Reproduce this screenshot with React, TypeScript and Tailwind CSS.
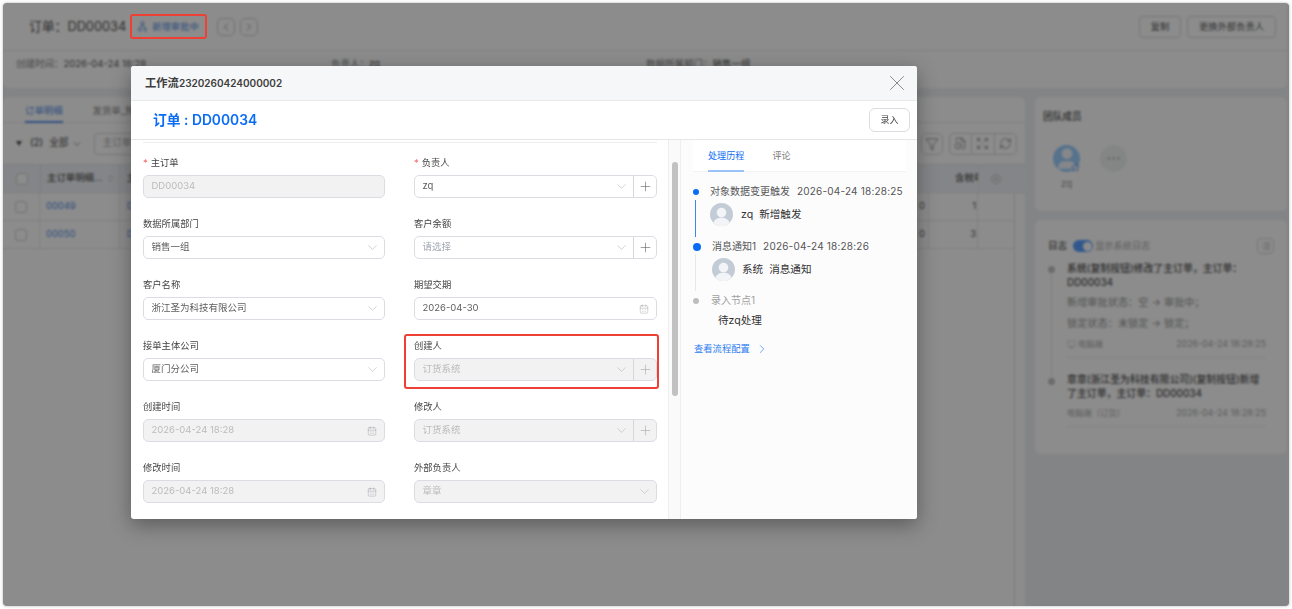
import { CalendarDays, ChevronDown, ChevronLeft, ChevronRight, ChevronsUpDown, Ellipsis, Expand, FileClock, Filter, List, Monitor, Plus, RefreshCw, Settings, Star, User, X } from 'lucide-react';

const font = "font-['Inter','Noto_Sans_CJK_SC',sans-serif]";

function Avatar({ className }: { className: string }) {
  return (
    <div className={`flex shrink-0 items-end justify-center overflow-hidden rounded-full bg-[#c3ccd6] ${className}`}>
      <svg viewBox="0 0 24 24" className="h-full w-full" fill="#f2f4f7">
        <circle cx="12" cy="10" r="5" />
        <path d="M3 24c0-6 4-8.500 9-8.500s9 2.500 9 8.500z" />
      </svg>
    </div>
  );
}

function FlowIcon() {
  return (
    <svg width="9" height="11" viewBox="0 0 9 11" fill="none" stroke="currentColor" strokeWidth="0.9">
      <circle cx="4.500" cy="2.300" r="1.600" />
      <circle cx="1.800" cy="8.500" r="1.500" />
      <circle cx="7.200" cy="8.500" r="1.500" />
      <path d="M3.800 3.800 2.500 7M5.200 3.800 6.500 7" />
    </svg>
  );
}

function Field({ label, required, children }: { label: string; required?: boolean; children: React.ReactNode }) {
  return (
    <div className="h-[61px]">
      <div className="flex h-[19px] items-center text-[9.300px] leading-none text-[#444]">
        {required && <span className="mr-[3px] text-[#f56c6c]">*</span>}
        {label}
      </div>
      {children}
    </div>
  );
}

function Input({ value, disabled, placeholder, icon, plus }: { value: string; disabled?: boolean; placeholder?: boolean; icon?: 'chevron' | 'calendar'; plus?: boolean }) {
  const tone = disabled ? 'bg-[#f2f2f3] text-[#bbb]' : placeholder ? 'bg-white text-[#a3a9b3]' : 'bg-white text-[#5c5c5c]';
  return (
    <div className={`mt-[3px] flex h-[23px] items-center rounded-[5px] border border-[#dcdde2] text-[9.500px] ${tone}`}>
      <span className="flex-1 pl-[7.500px]">{value}</span>
      {icon === 'chevron' && <ChevronDown size={15} strokeWidth={0.9} className="mr-[4px] text-[#aeb2ba]" />}
      {icon === 'calendar' && <CalendarDays size={10} strokeWidth={0.9} className="mr-[7px] text-[#8c8f96]" />}
      {plus && (
        <span className="flex h-full w-[23px] items-center justify-center border-l border-[#d6d7dc]">
          <Plus size={15} strokeWidth={0.9} className={disabled ? 'text-[#a3a3a3]' : 'text-[#555]'} />
        </span>
      )}
    </div>
  );
}

function Background() {
  return (
    <div className="flex h-full flex-col pr-[2px] text-[#5c5c5c]">
      <div className="h-[85px] rounded-b-[6px] bg-white">
        <div className="-mr-[2px] flex h-[48px] items-center border-b border-[#e6e6e6] pl-[26px] pr-[13px]">
          <span className="text-[12.800px] text-[#555]">订单：DD00034</span>
          <span className="ml-[12px] flex items-center gap-[5px] text-[9.300px] text-[#5590e8]">
            <FlowIcon />
            新增审批中
          </span>
          <span className="ml-[18px] flex h-[18px] w-[18px] items-center justify-center rounded-[5px] border border-[#cfcfcf]"><ChevronLeft size={12} strokeWidth={1.2} /></span>
          <span className="ml-[5px] flex h-[18px] w-[18px] items-center justify-center rounded-[5px] border border-[#cfcfcf]"><ChevronRight size={12} strokeWidth={1.2} /></span>
          <span className="ml-auto flex h-[22px] w-[42px] items-center justify-center rounded-[4px] border border-[#d9d9d9] text-[9.300px]">复制</span>
          <span className="ml-[6px] flex h-[22px] w-[89px] items-center justify-center rounded-[4px] border border-[#d9d9d9] text-[9.300px]">更换外部负责人</span>
        </div>
        <div className="flex pl-[13px] pt-[6px] text-[9.500px] leading-[13px] text-[#888]">
          <span className="w-[315px]">创建时间：<span className="text-[#5c5c5c]">2026-04-24 18:28</span></span>
          <span className="w-[315px]">负责人：<span className="text-[#5c5c5c]">zq</span></span>
          <span>数据所属部门：<span className="text-[#5c5c5c]">销售一组</span></span>
        </div>
      </div>

      <div className="mt-[9px] flex flex-1 gap-[10px]">
        <div className="relative w-[1022px] rounded-t-[6px] bg-white">
          <div className="flex h-[26px] items-end gap-[30px] border-b border-[#e6e6e6] pl-[22px] text-[9.400px]">
            <span className="-mb-px border-b-2 border-[#5590e8] pb-[3px] text-[#5590e8]">订单明细</span>
            <span className="pb-[4px] text-[#888]">发货单_预...</span>
          </div>
          <div className="flex h-[41px] items-center pl-[13px] text-[9.700px]">
            <span className="mr-[8px] h-0 w-0 border-x-[3px] border-t-[5px] border-x-transparent border-t-[#555]" />
            <span className="font-medium">(2)</span>
            <span className="ml-[6px]">全部</span>
            <ChevronDown size={12} strokeWidth={1.3} className="ml-[2px]" />
            <span className="ml-[11px] flex h-[22px] w-[200px] items-center rounded-[4px] border border-[#d9d9d9] pl-[8px] text-[#aaa]">主订单</span>
            <span className="ml-auto flex h-[22px] w-[22px] items-center justify-center rounded-[5px] border border-[#d9d9d9]"><Filter size={14} strokeWidth={1.1} /></span>
            <span className="ml-[6px] mr-[8px] flex h-[22px] w-[68px] items-center rounded-[5px] border border-[#d9d9d9]">
              <span className="flex flex-1 justify-center"><FileClock size={13} strokeWidth={1.1} /></span>
              <span className="flex h-full flex-1 items-center justify-center border-x border-[#d9d9d9]"><Expand size={13} strokeWidth={1.1} /></span>
              <span className="flex flex-1 justify-center"><RefreshCw size={13} strokeWidth={1.1} /></span>
            </span>
          </div>
          <div className="flex h-[29px] items-center border-y border-[#e6e6e6] bg-[#f0f3f8] text-[9.400px] font-medium">
            <span className="flex w-[37px] justify-center"><span className="h-[12px] w-[12px] rounded-[3px] border border-[#cfcfcf] bg-white" /></span>
            <span className="flex h-full w-[80px] items-center justify-between border-x border-[#e0e0e0] pl-[6px] pr-[4px]">主订单明细...<ChevronsUpDown size={9} className="text-[#aaa]" /></span>
            <span className="pl-[7px]">主</span>
            <span className="ml-auto w-[23px] overflow-hidden whitespace-nowrap">含税单价</span>
            <span className="flex h-full w-[47px] items-center justify-center border-l border-[#e4e6ea] pr-[12px]"><Settings size={12} strokeWidth={0.9} className="text-[#999]" /></span>
          </div>
          {['00049', '00050'].map((id, i) => (
            <div key={id} className="mr-[11px] flex h-[28px] items-center border-b border-[#e6e6e6] text-[9.400px]">
              <span className="flex h-full w-[37px] items-center justify-center border-r border-[#e6e6e6]"><span className="h-[12px] w-[12px] rounded-[3px] border border-[#cfcfcf]" /></span>
              <span className="flex h-full w-[80px] items-center border-r border-[#e6e6e6] pl-[6px] text-[#5590e8]">{id}</span>
              <span className="pl-[7px] text-[#5590e8]">D</span>
              <span className="ml-auto flex h-full w-[10px] items-center border-r border-[#e6e6e6]">0</span>
              <span className="flex h-full w-[49px] items-center justify-end border-r border-[#e6e6e6] pr-[1px]">{i === 0 ? '1' : '3'}</span>
              <span className="w-[36px]" />
            </div>
          ))}
          <span className="absolute bottom-0 right-[10px] top-[96px] w-px bg-[#e2e2e2]" />
        </div>

        <div className="flex w-[252px] flex-col gap-[9px]">
          <div className="h-[114px] rounded-[6px] bg-white pl-[8px] pt-[13px]">
            <div className="text-[9.700px] font-medium">团队成员</div>
            <div className="mt-[20px] flex gap-[20px] pl-[10px]">
              <div className="relative">
                <div className="flex h-[27px] w-[27px] items-end justify-center overflow-hidden rounded-full bg-[#9dd0ff]">
                  <User size={26} fill="#f3f6fb" stroke="#f3f6fb" />
                </div>
                <Star size={9} className="absolute right-0 top-[18px] text-[#5590e8]" />
                <div className="mt-[5px] text-center text-[9.500px] text-[#999]">zq</div>
              </div>
              <div className="flex h-[27px] w-[27px] items-center justify-center rounded-full bg-[#f0f3f2]"><Ellipsis size={17} strokeWidth={1} className="text-[#999]" /></div>
            </div>
          </div>
          <div className="h-[234px] rounded-[6px] bg-white pl-[13px] pr-[21px] pt-[18px] text-[10.200px]">
            <div className="flex h-[16px] items-center">
              <span className="text-[9.600px] font-medium">日志</span>
              <span className="ml-[6px] flex h-[12px] w-[20px] items-center justify-end rounded-full bg-[#5aa0ff] pr-[1px]"><span className="h-[9px] w-[9px] rounded-full bg-white" /></span>
              <span className="ml-[2px] text-[9.200px] text-[#aaa]">显示系统日志</span>
              <span className="-mr-[8px] ml-auto flex h-[16px] w-[17px] items-center justify-center rounded-[4px] border border-[#d9d9d9]"><List size={10} strokeWidth={1.2} /></span>
            </div>
            <div className="relative mt-[7px] pl-[19px]">
              <span className="absolute left-0 top-[5px] h-[7px] w-[7px] rounded-full bg-[#c4c4c4]" />
              <span className="absolute left-[3px] top-[12px] h-[105px] w-px bg-[#e6e6e6]" />
              <div className="whitespace-nowrap text-[9.900px] font-medium leading-[14px] text-[#555]">系统(复制按钮)修改了主订单，主订单：<br />DD00034</div>
              <div className="mt-[6px] leading-[14px] text-[#999]">新增审批状态：空 → 审批中；</div>
              <div className="mt-[7px] leading-[14px] text-[#999]">锁定状态：未锁定 → 锁定；</div>
              <div className="mt-[7px] flex h-[21px] items-start justify-between border-b border-[#eee] text-[8.800px] leading-[14px] text-[#aaa]">
                <span className="flex items-center gap-[2px] text-[8.300px]"><Monitor size={9} strokeWidth={1.2} />电脑端</span>
                <span>2026-04-24 18:28:25</span>
              </div>
              <span className="absolute left-0 top-[117px] h-[7px] w-[7px] rounded-full bg-[#c4c4c4]" />
              <div className="mt-[14px] whitespace-nowrap text-[9.900px] font-medium leading-[14px] text-[#555]">章章(浙江圣为科技有限公司)(复制按钮)新增<br />了主订单，主订单：DD00034</div>
              <div className="mt-[6px] flex h-[21px] items-start justify-between border-b border-[#eee] text-[8.800px] leading-[14px] text-[#aaa]">
                <span className="text-[8.300px]">电脑端（订货）</span>
                <span>2026-04-24 18:28:25</span>
              </div>
            </div>
          </div>
        </div>
      </div>
    </div>
  );
}

function Modal() {
  return (
    <div className="flex h-[453px] w-[786px] flex-col overflow-hidden rounded-[3px] bg-white shadow-[0_6px_20px_rgba(0,0,0,0.35)]">
      <div className="flex h-[35px] shrink-0 items-center justify-between border-b border-[#e8e9eb] bg-[#f6f7f9] pl-[14px] pr-[7px]">
        <span className="text-[11.300px] font-semibold text-[#3d3d3d]">工作流<span className="text-[10px]">2320260424000002</span></span>
        <X size={26} strokeWidth={0.9} className="text-[#888]" />
      </div>
      <div className="flex h-[39px] shrink-0 items-center justify-between border-b border-[#e6e6e6] pl-[22px] pr-[7px]">
        <span className="text-[13.800px] font-semibold text-[#0a6cf5]">订单 : DD00034</span>
        <span className="flex h-[24px] w-[41px] items-center justify-center rounded-[6px] border border-[#dcdde2] text-[9px] text-[#444]">录入</span>
      </div>
      <div className="flex min-h-0 flex-1">
        <div className="w-[537px] pl-[12px] pr-[11px]">
          <div className="mt-[2px] grid grid-cols-[242px_243px] gap-x-[29px] border-t border-[#eeeeee] pt-[10px]">
            <Field label="主订单" required><Input value="DD00034" disabled /></Field>
            <Field label="负责人" required><Input value="zq" icon="chevron" plus /></Field>
            <Field label="数据所属部门"><Input value="销售一组" icon="chevron" /></Field>
            <Field label="客户余额"><Input value="请选择" placeholder icon="chevron" plus /></Field>
            <Field label="客户名称"><Input value="浙江圣为科技有限公司" icon="chevron" /></Field>
            <Field label="期望交期"><Input value="2026-04-30" icon="calendar" /></Field>
            <Field label="接单主体公司"><Input value="厦门分公司" icon="chevron" /></Field>
            <div className="relative">
              <Field label="创建人"><Input value="订货系统" disabled icon="chevron" plus /></Field>
              <span className="absolute -left-[10px] -right-[2px] -top-[2px] h-[55px] rounded-[3px] border-2 border-[#ee4035]" />
            </div>
            <Field label="创建时间"><Input value="2026-04-24 18:28" disabled icon="calendar" /></Field>
            <Field label="修改人"><Input value="订货系统" disabled icon="chevron" plus /></Field>
            <Field label="修改时间"><Input value="2026-04-24 18:28" disabled icon="calendar" /></Field>
            <Field label="外部负责人"><Input value="章章" disabled icon="chevron" /></Field>
          </div>
        </div>
        <div className="w-[13px] border-x border-[#eeeeee] bg-[#fafafa] px-[3px] pt-[22px]">
          <div className="h-[234px] w-[6px] rounded-full bg-[#c1c1c1]" />
        </div>
        <div className="flex-1 bg-[#fcfcfd] pl-[12px] pr-[11px] text-[10px]">
          <div className="flex h-[32px] items-end gap-[28px] border-b border-[#f3f3f3] bg-white pl-[15px] text-[9.100px] leading-[12px]">
            <span className="-mb-px border-b-2 border-[#9cc3f8] pb-[8px] text-[#0a6cf5]">处理历程</span>
            <span className="pb-[9px] text-[#777]">评论</span>
          </div>
          <div className="relative mt-[12px] pl-[17px] text-[#555]">
            <span className="absolute left-0 top-[5px] h-[6px] w-[6px] rounded-full bg-[#0a6cf5]" />
            <span className="absolute left-[2px] top-[16px] h-[37px] w-px bg-[#3f86ea]" />
            <div className="whitespace-nowrap leading-[14px]">对象数据变更触发<span className="ml-[7px] tracking-[0.2px]">2026-04-24 18:28:25</span></div>
            <div className="mt-[5px] flex h-[23px] items-center gap-[8px] text-[10.600px] text-[#333]"><Avatar className="h-[23px] w-[23px]" /><span>zq<span className="ml-[6px]">新增触发</span></span></div>
            <span className="absolute left-0 top-[59px] h-[8px] w-[8px] rounded-full bg-[#0a6cf5]" />
            <span className="absolute left-[2px] top-[70px] h-[37px] w-px bg-[#e8e8e8]" />
            <div className="mt-[13px] whitespace-nowrap pl-[2px] leading-[14px]">消息通知1<span className="ml-[7px] tracking-[0.2px]">2026-04-24 18:28:26</span></div>
            <div className="mt-[5px] flex h-[23px] items-center gap-[7px] pl-[2px] text-[10.600px] text-[#333]"><Avatar className="h-[23px] w-[23px]" /><span>系统<span className="ml-[6px]">消息通知</span></span></div>
            <span className="absolute left-0 top-[114px] h-[6px] w-[6px] rounded-full bg-[#bdbdbd]" />
            <div className="mt-[12px] pl-[1px] leading-[14px] text-[#a0a0a0]">录入节点1</div>
            <div className="mt-[7px] pl-[8px] text-[10.600px] leading-[14px] text-[#333]">待zq处理</div>
            <div className="-ml-[16px] mt-[14px] flex items-center gap-[5px] text-[9.300px] leading-[14px] text-[#2b7cf0]">查看流程配置<ChevronRight size={14} strokeWidth={1.1} /></div>
          </div>
        </div>
      </div>
    </div>
  );
}

export default function App() {
  return (
    <div className={`relative h-[609px] w-[1292px] overflow-hidden bg-white p-[3px] blur-[0.3px] ${font}`}>
      <div className="relative h-[603px] w-[1286px] overflow-hidden rounded-[3px] bg-[#eff1f4] shadow-[0_0_3px_rgba(0,0,0,0.3)]">
        <Background />
        <div className="absolute inset-0 bg-black/45 backdrop-blur-[0.8px]" />
        <div className="absolute left-[128px] top-[63px]">
          <Modal />
        </div>
        <span className="absolute left-[127px] top-[11px] h-[25px] w-[77px] rounded-[3px] border-2 border-[#ee4035]" />
      </div>
    </div>
  );
}
